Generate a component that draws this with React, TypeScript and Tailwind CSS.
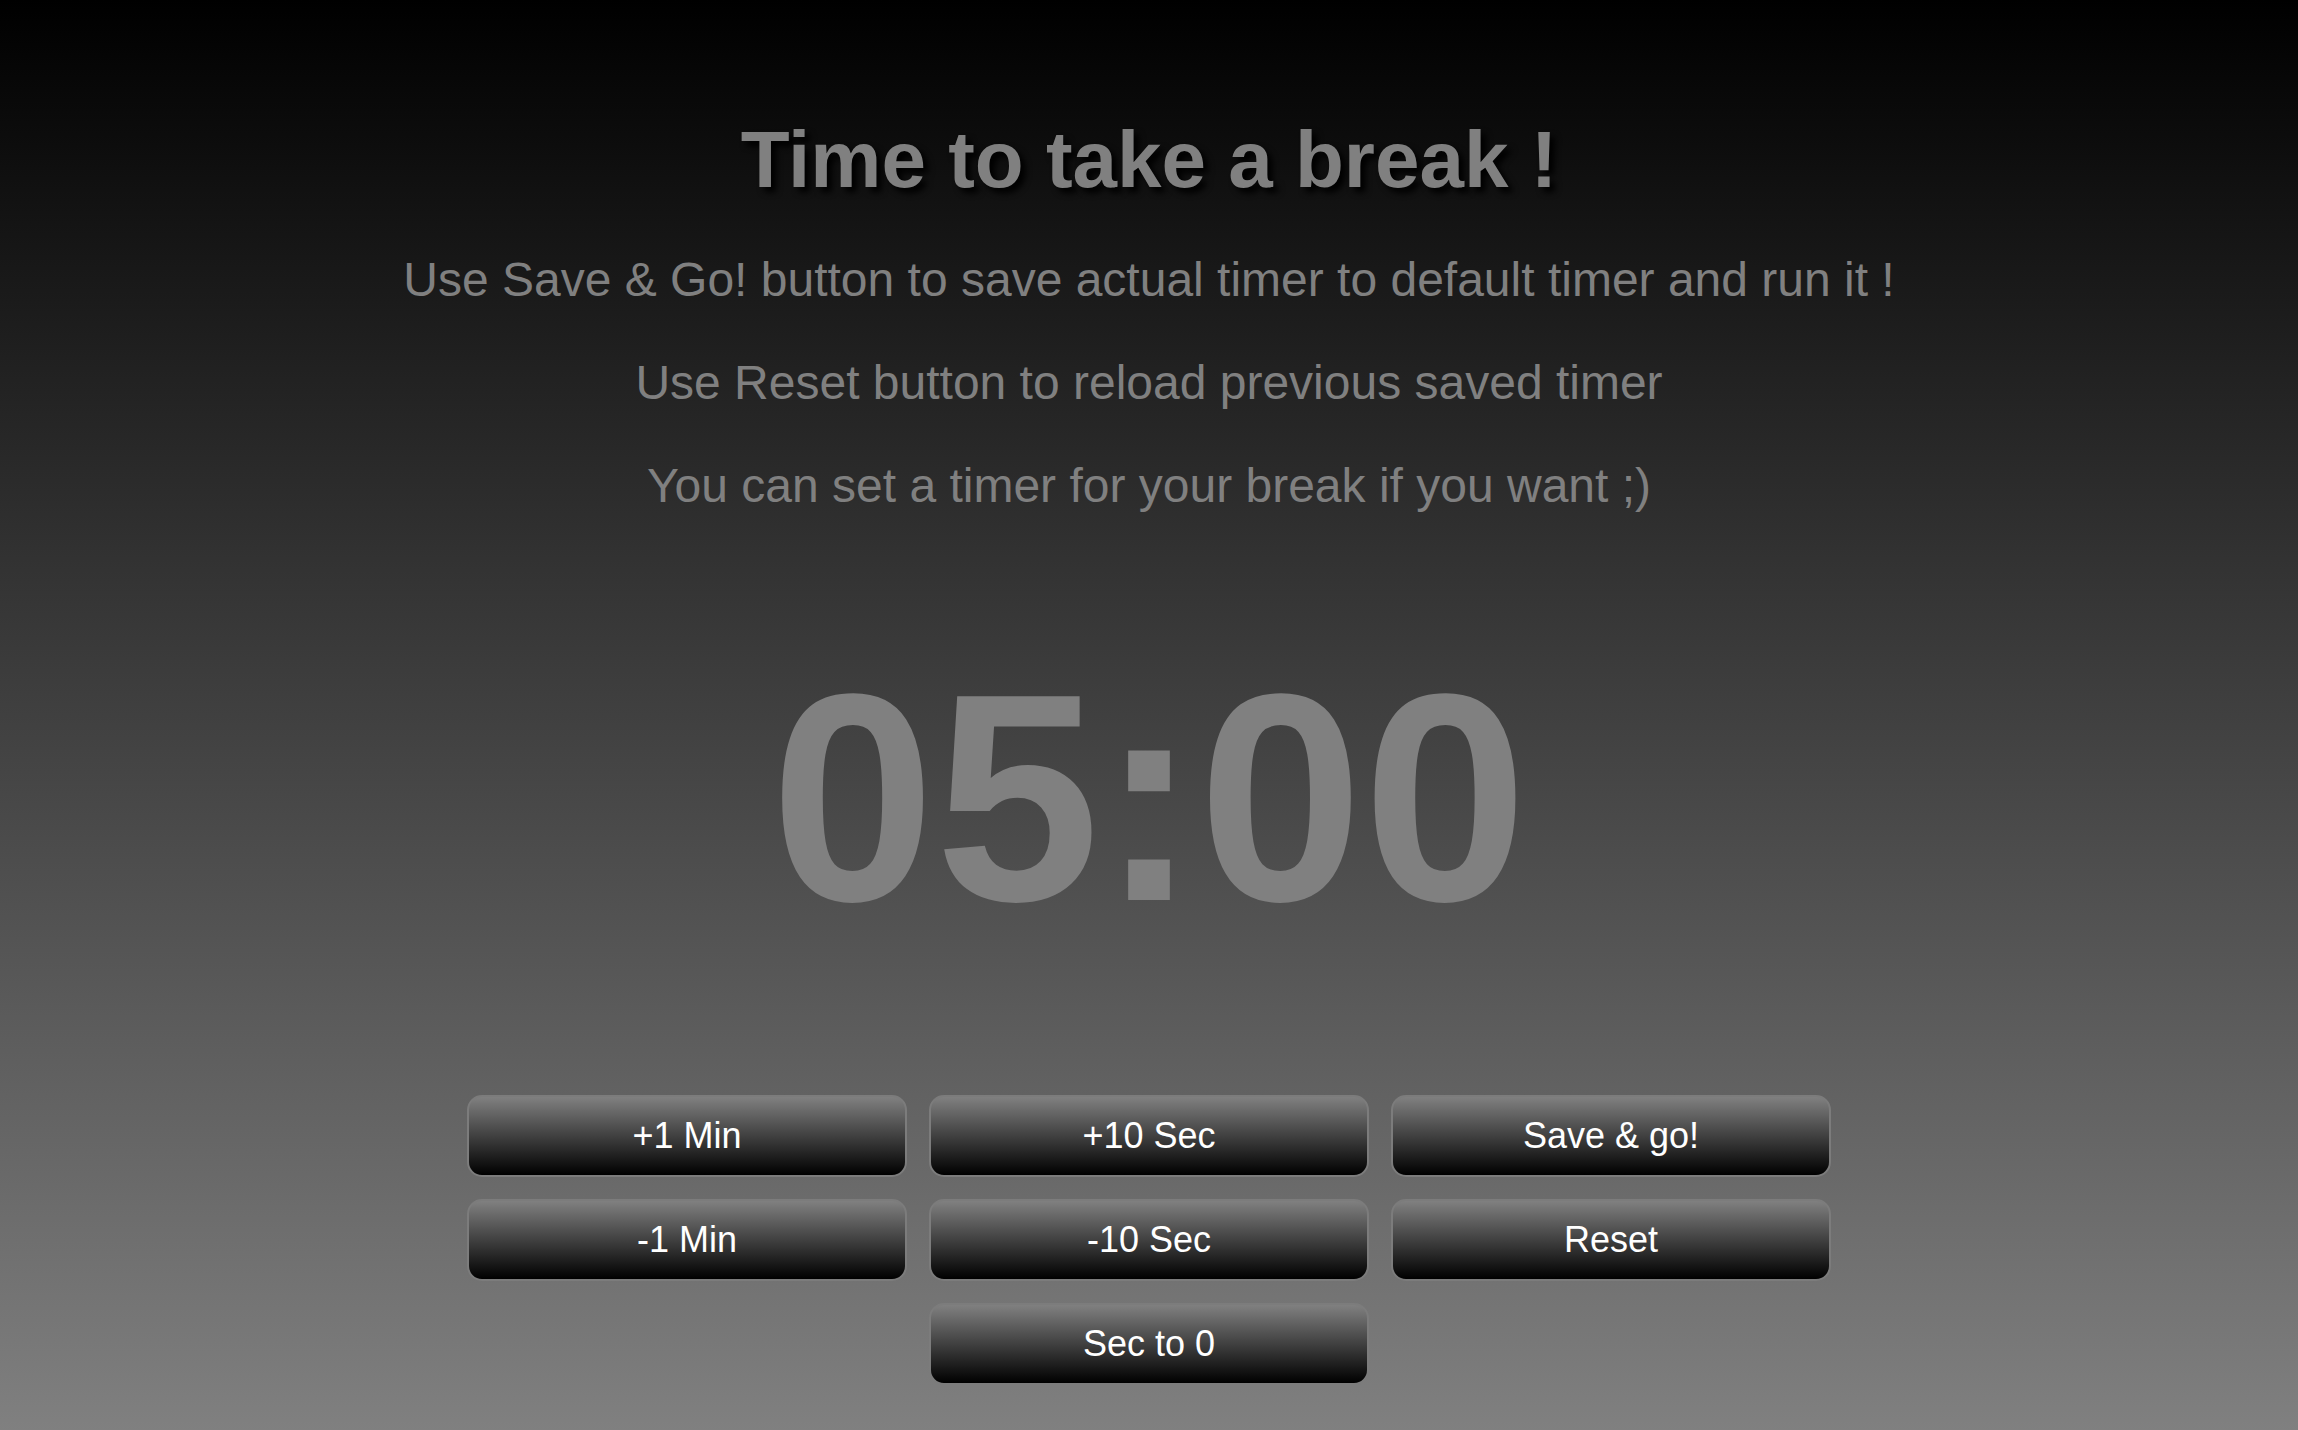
import React, { useState } from 'react';

const formatTime = (total: number) => {
  const m = Math.floor(total / 60);
  const s = total % 60;
  return `${String(m).padStart(2, '0')}:${String(s).padStart(2, '0')}`;
};

interface TimerButtonProps {
  label: string;
  onClick: () => void;
  className?: string;
}

const TimerButton: React.FC<TimerButtonProps> = ({ label, onClick, className = '' }) => (
  <button
    onClick={onClick}
    className={`h-[82px] rounded-[15px] border-2 border-[#7c7c7c] bg-[linear-gradient(to_bottom,#808080,#000)] text-[36px] text-white cursor-pointer ${className}`}
  >
    {label}
  </button>
);

const App: React.FC = () => {
  const [saved, setSaved] = useState<number>(300);
  const [seconds, setSeconds] = useState<number>(300);

  const add = (n: number) => setSeconds((s) => Math.max(0, s + n));

  return (
    <div className="min-h-screen w-full bg-[linear-gradient(to_bottom,#000,#808080)] font-['Liberation_Sans',Arial,sans-serif] text-[#808080]">
      <div className="flex flex-col items-center pt-[114px] pb-[46px]">
        {/* Header */}
        <h1 className="text-[80px] leading-[92px] font-bold [text-shadow:5px_5px_6px_#000]">
          Time to take a break !
        </h1>
        <p className="mt-[46px] text-[48px] leading-[55px]">
          Use Save &amp; Go! button to save actual timer to default timer and run it !
        </p>
        <p className="mt-[48px] text-[48px] leading-[55px]">
          Use Reset button to reload previous saved timer
        </p>
        <p className="mt-[48px] text-[48px] leading-[55px]">
          You can set a timer for your break if you want ;)
        </p>

        {/* Timer */}
        <div className="mt-[115px] text-[296px] leading-[340px] font-bold">
          {formatTime(seconds)}
        </div>

        {/* Controls */}
        <div className="mt-[127px] grid grid-cols-[440px_440px_440px] gap-x-[22px] gap-y-[22px]">
          <TimerButton label="+1 Min" onClick={() => add(60)} />
          <TimerButton label="+10 Sec" onClick={() => add(10)} />
          <TimerButton label="Save & go!" onClick={() => setSaved(seconds)} />
          <TimerButton label="-1 Min" onClick={() => add(-60)} />
          <TimerButton label="-10 Sec" onClick={() => add(-10)} />
          <TimerButton label="Reset" onClick={() => setSeconds(saved)} />
          <TimerButton label="Sec to 0" onClick={() => setSeconds((s) => s - (s % 60))} className="col-start-2" />
        </div>
      </div>
    </div>
  );
};

export default App;
